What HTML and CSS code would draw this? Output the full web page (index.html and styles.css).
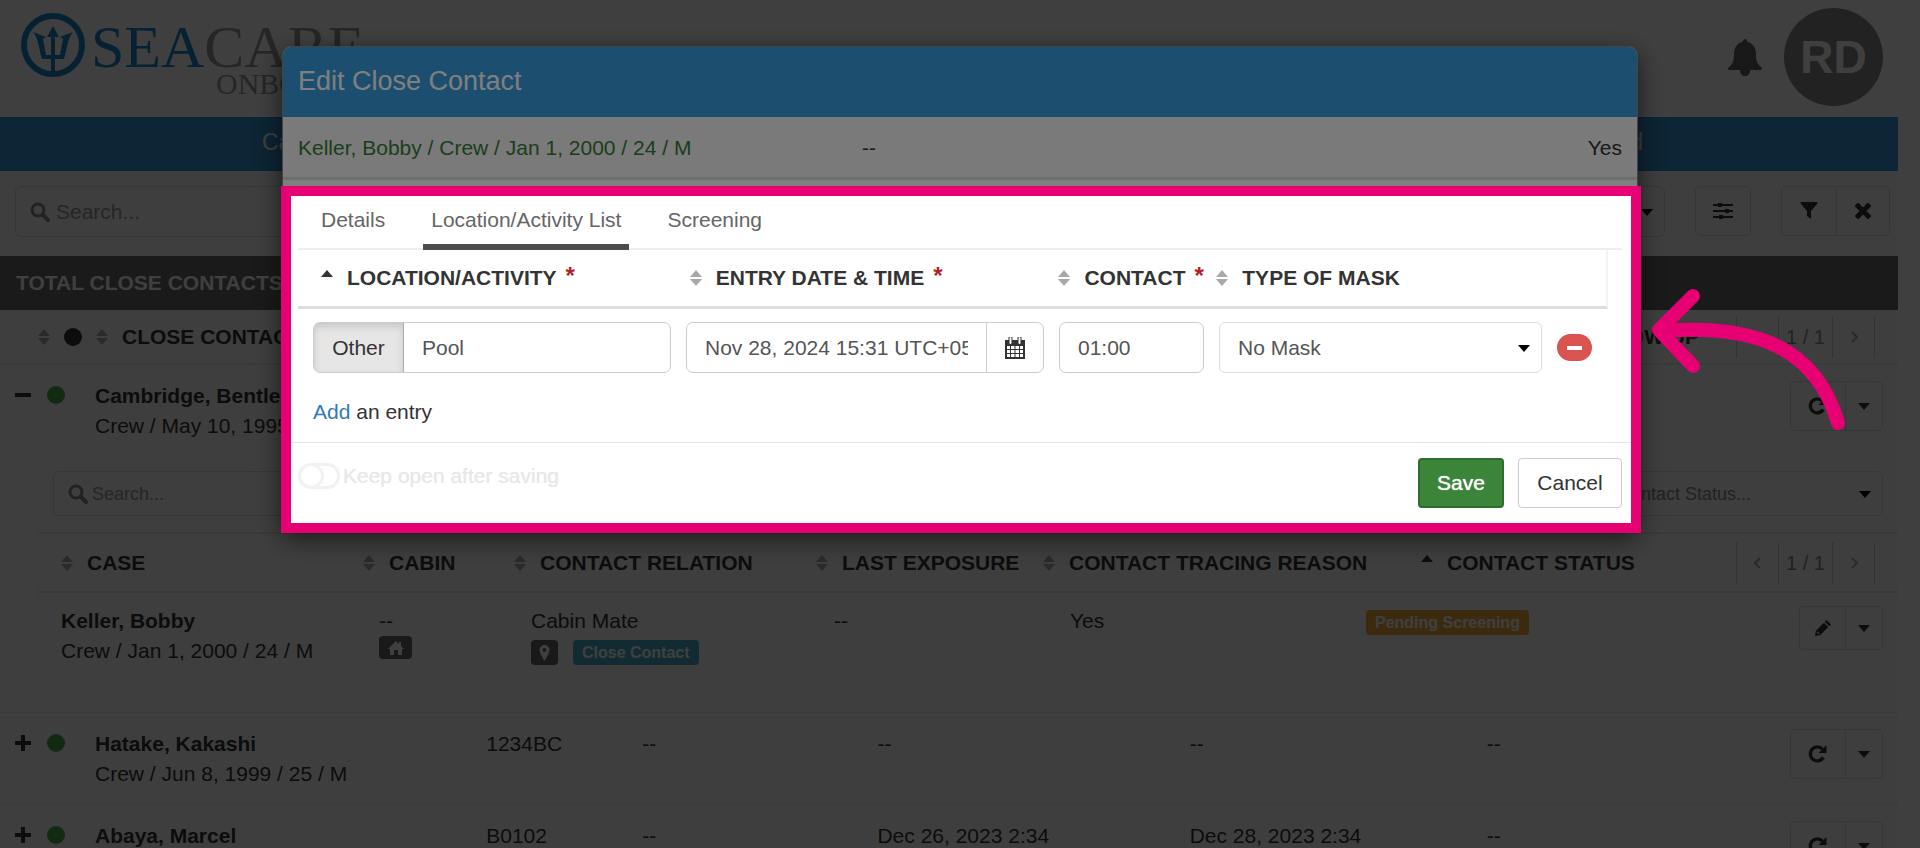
FILE: index.html
```html
<!DOCTYPE html>
<html lang="en">
<head>
    <meta charset="UTF-8">
    <meta name="viewport" content="width=device-width, initial-scale=1.0">
    <title>SeaCare Onboard - Close Contacts</title>
    <link rel="stylesheet" href="styles.css">
</head>
<body>
    <!-- shared icons -->
    <svg width="0" height="0" class="sprite" aria-hidden="true">
        <symbol id="search" viewBox="0 0 20 20"><circle cx="8" cy="8" r="6" fill="none" stroke="currentColor" stroke-width="3"/><path d="M12.500 12.500L18 18" stroke="currentColor" stroke-width="4" stroke-linecap="round"/></symbol>
        <symbol id="sort" viewBox="0 0 12 18"><path d="M6 1L12 8H0zM6 17L0 10H12z" fill="currentColor"/></symbol>
        <symbol id="sort-up" viewBox="0 0 12 18"><path d="M6 1L12 8H0z" fill="currentColor"/></symbol>
        <symbol id="caret" viewBox="0 0 12 8"><path d="M0 1H12L6 8z" fill="currentColor"/></symbol>
        <symbol id="refresh" viewBox="0 0 20 20"><path d="M15.300 13.500A7 7 0 1 1 14.500 5.200" fill="none" stroke="currentColor" stroke-width="3.400"/><path d="M18.500 1V9H10.500z" fill="currentColor"/></symbol>
        <symbol id="plus" viewBox="0 0 18 18"><path d="M7 1H11V7H17V11H11V17H7V11H1V7H7z" fill="currentColor"/></symbol>
        <symbol id="minus" viewBox="0 0 18 18"><path d="M1 7H17V11H1z" fill="currentColor"/></symbol>
        <symbol id="prev" viewBox="0 0 8 12"><path d="M6 1L1 6L6 11" fill="none" stroke="currentColor" stroke-width="2"/></symbol>
        <symbol id="next" viewBox="0 0 8 12"><path d="M2 1L7 6L2 11" fill="none" stroke="currentColor" stroke-width="2"/></symbol>
    </svg>

    <div class="page">
        <header class="top">
            <div class="logo">
                <svg class="trident" viewBox="0 0 64 64">
                    <circle cx="32" cy="32" r="29" fill="none" stroke="currentColor" stroke-width="6"/>
                    <path d="M32 13L38 24H34V42H39L42 26L39 24L52 19C47 24 46 36 43 46H34V59H30V46H21C18 36 17 24 12 19L25 24L22 26L25 42H30V24H26z" fill="currentColor"/>
                </svg>
                <div class="wordmark">
                    <div class="name"><span>SEA</span>CARE</div>
                    <div class="onboard">ONBOARD</div>
                </div>
            </div>
            <div class="account">
                <button class="bell" aria-label="Notifications">
                    <svg width="34" height="37" viewBox="0 0 34 37"><path d="M17 0C18.500 0 19 1 19 2.500C25 4 28 9 28 15C28 23 30 26 34 29C34 31 33 31 32 31H22C22 35 20 37 17 37C14 37 12 35 12 31H2C1 31 0 31 0 29C4 26 6 23 6 15C6 9 9 4 15 2.500C15 1 15.500 0 17 0z" fill="currentColor"/></svg>
                </button>
                <div class="avatar">RD</div>
            </div>
        </header>

        <nav class="nav">
            <a href="#">Cases</a>
            <a href="#">Dashboard</a>
        </nav>

        <div class="toolbar">
            <div class="search">
                <svg width="20" height="20"><use href="#search"/></svg>
                <input type="text" placeholder="Search..." aria-label="Search">
            </div>
            <div class="select filter-select">
                <select aria-label="Filter"><option></option></select>
                <svg width="12" height="8"><use href="#caret"/></svg>
            </div>
            <button class="btn settings" aria-label="Settings">
                <svg width="20" height="18" viewBox="0 0 20 18"><path d="M0 3H20M0 9H20M0 15H20" stroke="currentColor" stroke-width="2"/><path d="M5 1H9V5H5zM12 7H16V11H12zM6 13H10V17H6z" fill="currentColor"/></svg>
            </button>
            <div class="group">
                <button class="btn" aria-label="Filter list"><svg width="18" height="18" viewBox="0 0 18 18"><path d="M1 0H17Q18 1 17 2L11 9V17L7 14V9L1 2Q0 1 1 0z" fill="currentColor"/></svg></button>
                <button class="btn" aria-label="Clear filter"><svg width="16" height="16" viewBox="0 0 16 16"><path d="M3 3L13 13M13 3L3 13" stroke="currentColor" stroke-width="5" stroke-linecap="square"/></svg></button>
            </div>
        </div>

        <h2 class="total">TOTAL CLOSE CONTACTS</h2>

        <table class="contacts">
            <thead>
                <tr>
                    <th><svg class="sort"><use href="#sort"/></svg><span class="dot dark"></span></th>
                    <th><svg class="sort"><use href="#sort"/></svg>CLOSE CONTACT</th>
                    <th class="follow"><svg class="sort"><use href="#sort"/></svg>FOLLOW UP</th>
                    <th>
                        <div class="pager">
                            <button aria-label="Previous page"><svg width="8" height="12"><use href="#prev"/></svg></button>
                            <span>1 / 1</span>
                            <button aria-label="Next page"><svg width="8" height="12"><use href="#next"/></svg></button>
                        </div>
                    </th>
                </tr>
            </thead>
            <tbody>
                <tr class="row">
                    <td class="status"><button class="expand" aria-label="Collapse"><svg width="18" height="18"><use href="#minus"/></svg></button><span class="dot"></span></td>
                    <td><b>Cambridge, Bentley</b><br>Crew / May 10, 1995 / 29 / M</td>
                    <td></td>
                    <td></td>
                    <td></td>
                    <td></td>
                    <td></td>
                    <td class="actions">
                        <div class="group">
                            <button class="btn" aria-label="Refresh"><svg width="20" height="20"><use href="#refresh"/></svg></button>
                            <button class="btn more" aria-label="More"><svg width="12" height="8"><use href="#caret"/></svg></button>
                        </div>
                    </td>
                </tr>
                <tr class="nested">
                    <td>
                        <div class="sub-toolbar">
                            <div class="search">
                                <svg width="20" height="20"><use href="#search"/></svg>
                                <input type="text" placeholder="Search..." aria-label="Search cases">
                            </div>
                            <div class="select">
                                <select aria-label="Contact status"><option>Contact Status...</option></select>
                                <svg width="12" height="8"><use href="#caret"/></svg>
                            </div>
                        </div>
                        <table class="cases">
                            <thead>
                                <tr>
                                    <th><svg class="sort"><use href="#sort"/></svg>CASE</th>
                                    <th><svg class="sort"><use href="#sort"/></svg>CABIN</th>
                                    <th><svg class="sort"><use href="#sort"/></svg>CONTACT RELATION</th>
                                    <th><svg class="sort"><use href="#sort"/></svg>LAST EXPOSURE</th>
                                    <th><svg class="sort"><use href="#sort"/></svg>CONTACT TRACING REASON</th>
                                    <th><svg class="sort active"><use href="#sort-up"/></svg>CONTACT STATUS</th>
                                    <th>
                                        <div class="pager">
                                            <button aria-label="Previous page"><svg width="8" height="12"><use href="#prev"/></svg></button>
                                            <span>1 / 1</span>
                                            <button aria-label="Next page"><svg width="8" height="12"><use href="#next"/></svg></button>
                                        </div>
                                    </th>
                                </tr>
                            </thead>
                            <tbody>
                                <tr>
                                    <td><b>Keller, Bobby</b><br>Crew / Jan 1, 2000 / 24 / M</td>
                                    <td>
                                        <div>--</div>
                                        <span class="tag home"><svg width="16" height="14" viewBox="0 0 16 14"><path d="M8 0L11 3V1H13V5L16 8H14V14H10V9H6V14H2V8H0z" fill="currentColor"/></svg></span>
                                    </td>
                                    <td>
                                        <div>Cabin Mate</div>
                                        <div class="tags">
                                            <span class="tag"><svg width="11" height="16" viewBox="0 0 11 16"><path fill-rule="evenodd" d="M5.500 0A5 5 0 0 1 10.500 5C10.500 8 7 13 5.500 16C4 13 .5 8 .5 5A5 5 0 0 1 5.500 0zM5.500 3A2 2 0 1 0 5.500 7A2 2 0 1 0 5.500 3z" fill="currentColor"/></svg></span>
                                            <span class="tag info">Close Contact</span>
                                        </div>
                                    </td>
                                    <td>--</td>
                                    <td>Yes</td>
                                    <td><span class="tag warning">Pending Screening</span></td>
                                    <td class="actions">
                                        <div class="group small">
                                            <button class="btn" aria-label="Edit"><svg width="16" height="16" viewBox="0 0 18 18"><path fill-rule="evenodd" d="M0 18L1 12L10 3L15 8L6 17zM2 14L4 16L5 15L3 13zM11 2L13 0L18 5L16 7z" fill="currentColor"/></svg></button>
                                            <button class="btn more" aria-label="More"><svg width="12" height="8"><use href="#caret"/></svg></button>
                                        </div>
                                    </td>
                                </tr>
                            </tbody>
                        </table>
                    </td>
                </tr>
                <tr class="row">
                    <td class="status"><button class="expand" aria-label="Expand"><svg width="18" height="18"><use href="#plus"/></svg></button><span class="dot"></span></td>
                    <td><b>Hatake, Kakashi</b><br>Crew / Jun 8, 1999 / 25 / M</td>
                    <td>1234BC</td>
                    <td>--</td>
                    <td>--</td>
                    <td>--</td>
                    <td>--</td>
                    <td class="actions">
                        <div class="group">
                            <button class="btn" aria-label="Refresh"><svg width="20" height="20"><use href="#refresh"/></svg></button>
                            <button class="btn more" aria-label="More"><svg width="12" height="8"><use href="#caret"/></svg></button>
                        </div>
                    </td>
                </tr>
                <tr class="row">
                    <td class="status"><button class="expand" aria-label="Expand"><svg width="18" height="18"><use href="#plus"/></svg></button><span class="dot"></span></td>
                    <td><b>Abaya, Marcel</b></td>
                    <td>B0102</td>
                    <td>--</td>
                    <td>Dec 26, 2023 2:34</td>
                    <td>Dec 28, 2023 2:34</td>
                    <td>--</td>
                    <td class="actions">
                        <div class="group">
                            <button class="btn" aria-label="Refresh"><svg width="20" height="20"><use href="#refresh"/></svg></button>
                            <button class="btn more" aria-label="More"><svg width="12" height="8"><use href="#caret"/></svg></button>
                        </div>
                    </td>
                </tr>
            </tbody>
        </table>
    </div>

    <div class="backdrop">
        <div class="modal" role="dialog" aria-labelledby="modal-title">
            <h1 class="modal-title" id="modal-title">Edit Close Contact</h1>
            <div class="person">
                <span class="who">Keller, Bobby / Crew / Jan 1, 2000 / 24 / M</span>
                <span>--</span>
                <span class="answer">Yes</span>
            </div>

            <div class="spotlight">
                <div class="tabs">
                    <button>Details</button>
                    <button class="active">Location/Activity List</button>
                    <button>Screening</button>
                </div>
                <table class="entries">
                    <thead>
                        <tr>
                            <th><svg class="sort active"><use href="#sort-up"/></svg>LOCATION/ACTIVITY<span class="required">*</span></th>
                            <th><svg class="sort"><use href="#sort"/></svg>ENTRY DATE &amp; TIME<span class="required">*</span></th>
                            <th><svg class="sort"><use href="#sort"/></svg>CONTACT<span class="required">*</span></th>
                            <th><svg class="sort"><use href="#sort"/></svg>TYPE OF MASK</th>
                        </tr>
                    </thead>
                    <tbody>
                        <tr>
                            <td>
                                <div class="combo">
                                    <button class="other">Other</button>
                                    <input type="text" value="Pool" aria-label="Location or activity">
                                </div>
                            </td>
                            <td>
                                <div class="combo">
                                    <input type="text" value="Nov 28, 2024 15:31 UTC+05:30" aria-label="Entry date and time">
                                    <button aria-label="Pick a date">
                                        <svg width="20" height="22" viewBox="0 0 20 22"><path fill-rule="evenodd" d="M0 3H20V22H0zM2 9V12H5V9zM6 9V12H9.500V9zM10.500 9V12H14V9zM15 9V12H18V9zM2 13V16H5V13zM6 13V16H9.500V13zM10.500 13V16H14V13zM15 13V16H18V13zM2 17V20H5V17zM6 17V20H9.500V17zM10.500 17V20H14V17zM15 17V20H18V17z" fill="currentColor"/><path d="M5.500 1V6M14.500 1V6" stroke="currentColor" stroke-width="4" stroke-linecap="round"/><path d="M5.500 1V6M14.500 1V6" stroke="#fff" stroke-width="2" stroke-linecap="round"/></svg>
                                    </button>
                                </div>
                            </td>
                            <td>
                                <div class="combo"><input type="text" value="01:00" aria-label="Contact duration"></div>
                            </td>
                            <td>
                                <div class="select">
                                    <select aria-label="Type of mask"><option>No Mask</option></select>
                                    <svg width="12" height="8"><use href="#caret"/></svg>
                                </div>
                            </td>
                            <td><button class="remove" aria-label="Remove entry"></button></td>
                        </tr>
                    </tbody>
                </table>
                <p class="add"><a href="#">Add</a> an entry</p>
                <div class="footer">
                    <label class="keep"><input type="checkbox" disabled>Keep open after saving</label>
                    <div class="footer-buttons">
                        <button class="save">Save</button>
                        <button class="cancel">Cancel</button>
                    </div>
                </div>
                <!-- arrow pointing at the highlighted part -->
                <svg class="arrow" width="200" height="150" viewBox="0 0 200 150">
                    <path d="M187 137C165 61 104 38 11 45M42 10L8 44L42 80" fill="none" stroke="currentColor" stroke-width="14" stroke-linecap="round" stroke-linejoin="round"/>
                </svg>
            </div>
        </div>
    </div>
</body>
</html>
```
FILE: styles.css
```css
*, *::before {
    box-sizing: border-box;
}
body {
    margin: 0;
    height: 100vh;
    overflow: hidden;
    position: relative;
    font-family: "Liberation Sans", Arial, sans-serif;
    font-size: 21px;
    line-height: 30px;
    color: #333;
    background-color: #fff;
}
button, input, select {
    font: inherit;
    color: inherit;
    margin: 0;
}
button {
    padding: 0;
    border: none;
    background: none;
    cursor: pointer;
}
svg {
    display: block;
    flex: none;
}
a {
    color: #337ab7;
    text-decoration: none;
}
table {
    display: block;
}
thead, tbody, th, td {
    display: block;
    padding: 0;
}
.sprite {
    position: absolute;
}

/* page */
.page {
    height: 100%;
    overflow: hidden;
    margin-right: 22px;
    background-color: #fafafa;
}
.top {
    display: flex;
    justify-content: space-between;
    height: 117px;
    padding: 8px 15px 0 21px;
    background-color: #fff;
}
.logo {
    display: flex;
    gap: 6px;
}
.trident {
    width: 64px;
    height: 64px;
    margin-top: 5px;
    color: #1a86c8;
}
.wordmark {
    padding-top: 9px;
    font-family: "Liberation Serif", "Times New Roman", serif;
    color: #999;
    text-align: right;
}
.name {
    font-size: 60px;
    line-height: 60px;
}
.name span {
    color: #1a86c8;
}
.onboard {
    font-size: 30px;
    line-height: 14px;
}
.account {
    display: flex;
    gap: 22px;
}
.bell {
    height: 98px;
    color: #606060;
}
.avatar {
    width: 99px;
    height: 98px;
    border-radius: 50%;
    background-color: #888;
    color: #fff;
    font-size: 46px;
    font-weight: bold;
    line-height: 98px;
    text-align: center;
}
.nav {
    display: flex;
    justify-content: space-between;
    height: 54px;
    padding: 10px 255px 0 262px;
    background-color: #3494d4;
}
.nav a {
    color: #fff;
    font-size: 23px;
}
.toolbar {
    display: flex;
    height: 85px;
    padding: 15px 8px 0 15px;
}
.search {
    display: flex;
    align-items: center;
    gap: 4px;
    width: 400px;
    height: 51px;
    padding: 0 14px;
    border: 1px solid #d8d8d8;
    border-radius: 6px;
    color: #888;
}
.search input {
    width: 100%;
    padding: 0 2px;
    border: none;
    background: none;
}
.search input::placeholder {
    color: #999;
    opacity: 1;
}
.select {
    display: flex;
    align-items: center;
    height: 51px;
    padding: 0 11px 0 18px;
    border: 1px solid #ddd;
    border-radius: 6px;
    color: #000;
}
.select select {
    flex: 1;
    padding: 0;
    border: none;
    background: none;
    appearance: none;
    color: #555;
}
.filter-select {
    width: 300px;
    margin-left: auto;
}
.btn {
    display: flex;
    align-items: center;
    justify-content: center;
    width: 56px;
    height: 50px;
    border: 1px solid #d8d8d8;
    border-radius: 5px;
}
.settings {
    margin: 0 30px;
}
.group {
    display: flex;
}
.group .btn {
    width: 54px;
}
.group .btn:first-child {
    width: 55px;
    border-right: none;
    border-radius: 5px 0 0 5px;
}
.group .btn:last-child {
    border-radius: 0 5px 5px 0;
}
.group .more {
    width: 38px;
}
.small .btn {
    height: 44px;
}
.group.small .btn:first-child {
    width: 46px;
}
.total {
    height: 54px;
    margin: 0;
    padding-left: 16px;
    background-color: #686868;
    color: #fff;
    font-size: 21px;
    line-height: 54px;
}

/* tables */
th {
    display: flex;
    align-items: center;
    text-align: left;
    white-space: nowrap;
}
.sort {
    width: 12px;
    height: 18px;
    margin-right: 14px;
    color: #aaa;
}
.sort.active {
    color: #333;
}
.contacts > thead tr {
    display: grid;
    grid-template-columns: 58px 1fr 1fr 199px;
    height: 55px;
    padding-left: 38px;
    border-bottom: 2px solid #e8e8e8;
}
.follow {
    justify-content: flex-end;
}
.contacts > thead th:last-child, .cases th:last-child {
    justify-content: flex-end;
    padding-right: 23px;
}
.pager {
    display: flex;
    height: 42px;
    color: #888;
    font-size: 20px;
    line-height: 42px;
    font-weight: normal;
}
.pager button, .pager span {
    display: flex;
    align-items: center;
    justify-content: center;
    width: 42px;
    border-left: 1px solid #ccc;
}
.pager svg {
    color: #aaa;
}
.pager span {
    width: 54px;
}
.pager button:last-child {
    width: 43px;
    border-right: 1px solid #ccc;
}
.dot {
    width: 18px;
    height: 18px;
    border-radius: 50%;
    background-color: #44aa44;
}
.dot.dark {
    background-color: #333;
}
.row {
    display: grid;
    grid-template-columns: 95px 391fr 156fr 235fr 312fr 297fr 300fr 96px;
    min-height: 92px;
    padding: 16px 15px 0 0;
    border-bottom: 1px solid #e8e8e8;
}
.row:first-child {
    border-bottom: none;
}
.status {
    display: flex;
    align-items: center;
    gap: 15px;
    height: 28px;
    padding-left: 14px;
}
.actions {
    justify-self: end;
}
.nested {
    display: block;
    border-bottom: 1px solid #e8e8e8;
}
.nested > td {
    padding-left: 38px;
}
.sub-toolbar {
    display: flex;
    justify-content: space-between;
    padding: 14px 15px 16px 15px;
    font-size: 18px;
}
.sub-toolbar .search, .sub-toolbar .select {
    height: 45px;
}
.sub-toolbar .search input {
    padding: 0;
}
.sub-toolbar .select {
    width: 284px;
}
.sub-toolbar select {
    color: #888;
}
.cases {
    border-top: 2px solid #e5e5e5;
    border-left: 1px solid #f0f0f0;
}
.cases thead tr {
    display: grid;
    grid-template-columns: 302fr 151fr 302fr 227fr 378fr 314fr 163px;
    height: 59px;
    padding-left: 22px;
    border-bottom: 2px solid #e5e5e5;
}
.cases tbody tr {
    display: grid;
    grid-template-columns: 318fr 152fr 303fr 236fr 296fr 417fr 100px;
    height: 119px;
    padding: 13px 15px 0 22px;
}
.tags {
    display: flex;
    gap: 15px;
    padding-top: 4px;
}
.tag {
    display: inline-flex;
    align-items: center;
    justify-content: center;
    min-width: 27px;
    height: 25px;
    border-radius: 4px;
    background-color: #666;
    color: #fff;
    font-size: 16px;
    line-height: 24px;
    font-weight: bold;
    vertical-align: top;
    white-space: nowrap;
}
.home {
    width: 33px;
    height: 23px;
}
.info {
    padding: 0 9px;
    background-color: #4bafc8;
}
.warning {
    padding: 0 9px;
    margin-top: 4px;
    background-color: #f0a83c;
}

/* modal */
.backdrop {
    position: absolute;
    inset: 0;
    padding: 46px 282px 0 282px;
    background-color: rgba(0, 0, 0, 0.5);
}
.modal {
    border: 1px solid #888;
    border-radius: 9px;
    background-color: #fff;
    box-shadow: 0 8px 26px rgba(0, 0, 0, 0.6);
}
.modal-title {
    height: 70px;
    margin: 0;
    padding-left: 15px;
    border-radius: 8px 8px 0 0;
    background-color: #389cde;
    color: #fff;
    font-size: 27px;
    line-height: 68px;
    font-weight: normal;
}
.person {
    display: grid;
    grid-template-columns: 564fr 565fr 195fr;
    height: 63px;
    padding: 16px 15px 0 15px;
    border-bottom: 3px solid #ddd;
    background-color: #f4f4f4;
}
.who {
    color: #347d34;
}
.answer {
    text-align: right;
}
/* everything outside of this box is dimmed once more */
.spotlight {
    position: relative;
    margin: 6px -4px -4px -2px;
    border: 10px solid #e60073;
    background-color: #fff;
    box-shadow: 0 0 0 2000px rgba(0, 0, 0, 0.5);
}
.tabs {
    display: flex;
    gap: 30px;
    margin: 0 9px 0 7px;
    padding-left: 15px;
    border-bottom: 2px solid #eee;
}
.tabs button {
    height: 54px;
    padding: 0 8px;
    margin-bottom: -2px;
    border-bottom: 6px solid transparent;
    color: #666;
    line-height: 30px;
}
.tabs .active {
    border-bottom-color: #4d4d4d;
}
.entries {
    margin: 0 23px 0 7px;
}
.entries thead tr {
    display: grid;
    grid-template-columns: 369fr 369fr 158fr 390fr;
    height: 59px;
    padding-left: 23px;
    border-right: 2px solid #f3f3f3;
    border-bottom: 3px solid #ddd;
}
.required {
    align-self: flex-start;
    margin-top: 11px;
    padding-left: 9px;
    color: #b22222;
    font-size: 24px;
}
.entries tbody tr {
    display: grid;
    grid-template-columns: 358fr 358fr 145fr 323fr 35px;
    gap: 15px;
    align-items: center;
    padding: 13px 16px 0 15px;
}
.combo {
    display: flex;
    height: 51px;
    border: 1px solid #ccc;
    border-radius: 7px;
    color: #555;
}
.combo input {
    flex: 1;
    width: 0;
    padding: 0 18px;
    border: none;
    background: none;
}
.combo button {
    width: 57px;
    border-left: 1px solid #ccc;
    color: #333;
}
.combo button svg {
    margin: 0 auto;
}
.combo .other {
    width: 90px;
    border-left: none;
    border-right: 1px solid #aaa;
    border-radius: 5px 0 0 5px;
    background-color: #e6e6e6;
    box-shadow: inset 0 4px 7px rgba(0, 0, 0, 0.13);
}
.remove {
    display: flex;
    align-items: center;
    justify-content: center;
    width: 35px;
    height: 27px;
    border-radius: 14px;
    background-color: #d9534f;
}
.remove::before {
    content: "";
    width: 15px;
    height: 4px;
    background-color: #fff;
}
.add {
    margin: 24px 22px 15px 22px;
}
.footer {
    display: flex;
    justify-content: space-between;
    height: 81px;
    padding: 15px 9px 0 7px;
    border-top: 1px solid #e5e5e5;
}
.keep {
    display: flex;
    align-items: center;
    gap: 3px;
    height: 36px;
    color: #e8e8e8;
    text-shadow: 0 0 1px #e8e8e8;
}
.keep input {
    appearance: none;
    display: flex;
    align-items: center;
    width: 42px;
    height: 26px;
    border: 3px solid #f2f2f2;
    border-radius: 13px;
}
.keep input::before {
    content: "";
    flex: none;
    width: 26px;
    height: 26px;
    margin-left: -3px;
    border: 3px solid #f2f2f2;
    border-radius: 13px;
}
.footer-buttons {
    display: flex;
    gap: 14px;
}
.footer-buttons button {
    width: 104px;
    height: 50px;
    border: 1px solid #ccc;
    border-radius: 4px;
}
.footer-buttons .save {
    width: 86px;
    border: 2px solid #2d6e2d;
    background-color: #3a853a;
    color: #fff;
    text-shadow: 0 0 1px #fff;
}
.arrow {
    position: absolute;
    top: 90px;
    left: 100%;
    margin-left: 20px;
    color: #e60073;
}
```
